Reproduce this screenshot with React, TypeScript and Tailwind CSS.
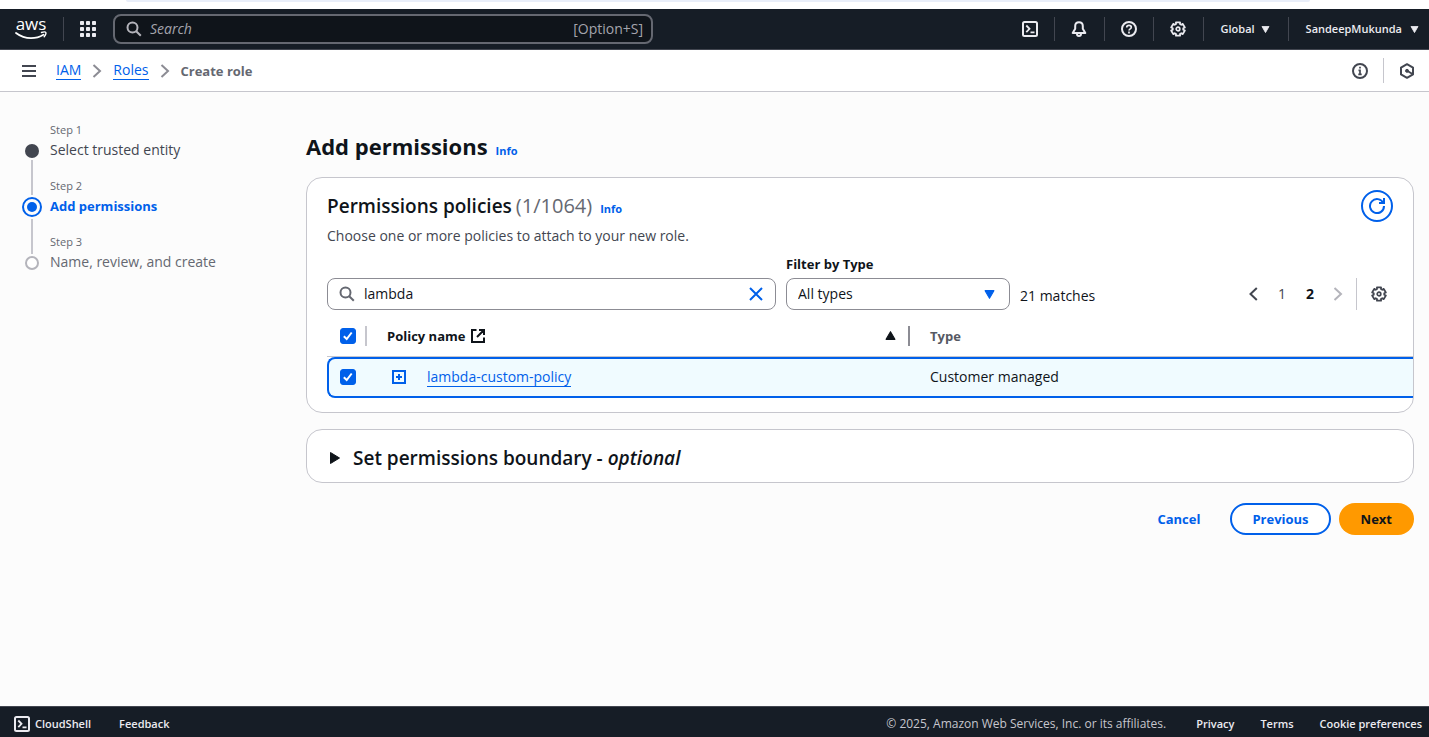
import { useState, type ReactNode } from "react";

function AwsLogo() {
  return (
    <span className="flex w-8 flex-col items-center text-white">
      <span className="pb-px text-[17px] leading-3 font-medium">aws</span>
      <svg viewBox="0 0 32 9" className="h-[9px] w-8" fill="none" stroke="currentColor">
        <path d="M1 2c4.500 3.400 9.500 5.200 15 5.200 4.500 0 9-1.300 12.500-3.400" strokeWidth="1.800" strokeLinecap="round" />
        <path d="M26.500 1.500c2-.7 4-.6 4.300 0 .3.700-.3 2.800-1.600 4.300" strokeWidth="1.400" strokeLinecap="round" />
      </svg>
    </span>
  );
}

function Icon({ children, className = "size-4" }: { children: ReactNode; className?: string }) {
  return (
    <svg viewBox="0 0 16 16" className={className} fill="none" stroke="currentColor" strokeWidth="2" aria-hidden="true">
      {children}
    </svg>
  );
}

function GridIcon() {
  const stops = [0, 6, 12];
  return (
    <svg viewBox="0 0 16 16" className="size-4" fill="currentColor" aria-hidden="true">
      {stops.map((y) => stops.map((x) => <rect key={`${x}-${y}`} x={x} y={y} width="4" height="4" rx="0.8" />))}
    </svg>
  );
}

function GearIcon() {
  return (
    <Icon>
      <path
        d="M10.050 1.300 9.980 3.090l1.280.73 1.510-.94 2.050 3.550-1.570.83v1.480l1.570.83-2.050 3.550-1.510-.94-1.280.73.070 1.790h-4.100l.070-1.790-1.280-.73-1.510.94-2.050-3.550 1.570-.83V7.260l-1.570-.83 2.050-3.550 1.510.94 1.280-.73L5.950 1.300z"
        strokeWidth="1.800"
        strokeLinejoin="round"
      />
      <circle cx="8" cy="8" r="1.800" strokeWidth="1.700" />
    </Icon>
  );
}

function SearchIcon({ className }: { className?: string }) {
  return (
    <Icon className={className}>
      <circle cx="6.500" cy="6.500" r="5" />
      <path d="m10.200 10.200 4.600 4.600" />
    </Icon>
  );
}

function ShellIcon() {
  return (
    <Icon>
      <rect x="1" y="1" width="14" height="14" rx="1.500" />
      <path d="m4.300 4.500 3.200 3.300-3.200 3.300M8.500 11.300h4" strokeWidth="1.800" />
    </Icon>
  );
}

function ChevronRight({ className }: { className?: string }) {
  return (
    <Icon className={className}>
      <path d="m4.500 2 6.500 6-6.500 6" />
    </Icon>
  );
}

function Caret({ className }: { className: string }) {
  return (
    <svg viewBox="0 0 10 8" className={className} fill="currentColor" aria-hidden="true">
      <path d="M1 .5h8l-4 7z" stroke="currentColor" strokeWidth="1" strokeLinejoin="round" />
    </svg>
  );
}

function Checkbox({ label }: { label: string }) {
  const [checked, setChecked] = useState(true);
  return (
    <span className="grid size-4">
      <input
        type="checkbox"
        aria-label={label}
        checked={checked}
        onChange={(e) => setChecked(e.target.checked)}
        className="col-start-1 row-start-1 size-4 appearance-none rounded-[3px] border border-[#8c8c94] bg-white checked:border-[#0060ea] checked:bg-[#0060ea]"
      />
      {checked && (
        <svg viewBox="0 0 16 16" className="pointer-events-none col-start-1 row-start-1 size-4" fill="none" stroke="#fff" strokeWidth="2">
          <path d="m3.800 8.300 2.900 2.700 5-6.500" />
        </svg>
      )}
    </span>
  );
}

function Info() {
  return (
    <a href="#info" className="text-[11px] leading-4 font-bold text-[#0060ea]">
      Info
    </a>
  );
}

function TopBar() {
  return (
    <header className="flex h-[41px] items-center border-b border-[#424650] bg-[#161d26] text-[#ebebf0]">
      <a href="#home" aria-label="AWS home" className="ml-[15px]">
        <AwsLogo />
      </a>
      <span className="ml-4 h-6 w-px bg-[#424650]" />
      <button aria-label="Services" className="ml-4">
        <GridIcon />
      </button>
      <label className="ml-[17px] flex h-[30px] w-[540px] items-center rounded-lg border-2 border-[#656871] bg-[#0f141a] px-2 text-[#b4b4bb]">
        <SearchIcon className="ml-[3px] size-4" />
        <input
          aria-label="Search"
          placeholder="Search"
          className="ml-2 min-w-0 flex-1 bg-transparent italic outline-none placeholder:text-[#a4a4ad]"
        />
        <span className="text-[#a4a4ad]">[Option+S]</span>
      </label>
      <nav className="ml-auto flex items-center text-[11px] font-semibold">
        <button aria-label="CloudShell" className="flex w-12 justify-center">
          <ShellIcon />
        </button>
        <span className="h-6 w-px bg-[#424650]" />
        <button aria-label="Notifications" className="flex w-[49px] justify-center">
          <Icon>
            <path d="M8 1.200C5.600 1.200 4.200 3 4.200 5v2.700L1.700 12h12.600l-2.500-4.300V5c0-2-1.400-3.800-3.800-3.800Z" strokeLinejoin="round" />
            <path d="M6 13c0 1.300.8 2 2 2s2-.7 2-2" />
          </Icon>
        </button>
        <span className="h-6 w-px bg-[#424650]" />
        <button aria-label="Help" className="flex w-12 justify-center">
          <Icon>
            <circle cx="8" cy="8" r="7" />
            <path d="M5.700 6.500C5.700 5 6.700 4.300 8 4.300s2.300.8 2.300 2C10.300 7.900 8 7.800 8 9.600M8 10.600v1.800" strokeWidth="1.700" />
          </Icon>
        </button>
        <span className="h-6 w-px bg-[#424650]" />
        <button aria-label="Settings" className="flex w-[49px] justify-center">
          <GearIcon />
        </button>
        <span className="h-6 w-px bg-[#424650]" />
        <button className="flex items-center gap-1.5 pr-[18px] pl-[17px]">
          Global <Caret className="h-[7px] w-[9px]" />
        </button>
        <span className="h-6 w-px bg-[#424650]" />
        <button className="flex items-center gap-2 pr-2.5 pl-[17px]">
          SandeepMukunda <Caret className="h-[7px] w-[9px]" />
        </button>
      </nav>
    </header>
  );
}

function Breadcrumbs() {
  return (
    <div className="flex h-[42px] items-center border-b border-[#c6c6cd] bg-white pl-[21px]">
      <button aria-label="Open navigation" className="text-[#424650]">
        <Icon>
          <path d="M1 3h14M1 8h14M1 13h14" />
        </Icon>
      </button>
      <nav aria-label="Breadcrumbs" className="ml-[19px] flex items-center gap-2">
        <a href="#iam" className="border-b border-[#0060ea] leading-[18px] text-[#0060ea]">
          IAM
        </a>
        <ChevronRight className="size-4 text-[#8c8c94]" />
        <a href="#roles" className="border-b border-[#0060ea] leading-[18px] text-[#0060ea]">
          Roles
        </a>
        <ChevronRight className="size-4 text-[#8c8c94]" />
        <span className="text-[13px] font-bold text-[#656871]">Create role</span>
      </nav>
      <div className="ml-auto flex items-center text-[#424650]">
        <button aria-label="Help panel">
          <Icon>
            <circle cx="8" cy="8" r="7" />
            <path d="M8 3.800v1.800M6.500 7.300H8v4M6.300 11.400h3.400" strokeWidth="1.700" />
          </Icon>
        </button>
        <span className="mx-[15px] h-[25px] w-px bg-[#c6c6cd]" />
        <button aria-label="Tools" className="mr-3.5">
          <Icon>
            <path d="m8 1.200 6 3.400v6.800l-6 3.400-6-3.400V4.600z" strokeLinejoin="round" />
            <path d="m8.500 8 5 3" />
            <circle cx="8" cy="7.800" r="1.500" fill="currentColor" strokeWidth="1" />
          </Icon>
        </button>
      </div>
    </div>
  );
}

function Steps() {
  return (
    <nav aria-label="Steps" className="w-[306px] shrink-0 pt-[30px] pl-[22px]">
      <ol>
        <li className="flex h-14 gap-2">
          <span className="flex w-5 flex-col items-center pt-[22px]">
            <span className="size-3.5 shrink-0 rounded-full bg-[#424650]" />
            <span className="mt-0.5 h-[35px] w-0.5 shrink-0 bg-[#c6c6cd]" />
          </span>
          <span className="flex flex-col">
            <span className="text-[11px] leading-4 text-[#656871]">Step 1</span>
            <a href="#step-1" className="mt-0.5 text-[#424650]">Select trusted entity</a>
          </span>
        </li>
        <li className="flex h-14 gap-2">
          <span className="flex w-5 flex-col items-center pt-[19px]">
            <span className="flex size-5 shrink-0 items-center justify-center rounded-full border-2 border-[#0060ea]">
              <span className="size-2.5 rounded-full bg-[#0060ea]" />
            </span>
            <span className="mt-0.5 h-[35px] w-0.5 shrink-0 bg-[#c6c6cd]" />
          </span>
          <span className="flex flex-col">
            <span className="text-[11px] leading-4 text-[#656871]">Step 2</span>
            <span aria-current="step" className="mt-0.5 text-[13px] font-bold text-[#0060ea]">Add permissions</span>
          </span>
        </li>
        <li className="flex gap-2">
          <span className="flex w-5 flex-col items-center pt-[22px]">
            <span className="size-3.5 rounded-full border-2 border-[#b4b4bb] bg-white" />
          </span>
          <span className="flex flex-col">
            <span className="text-[11px] leading-4 text-[#656871]">Step 3</span>
            <span className="mt-0.5 text-[#656871]">Name, review, and create</span>
          </span>
        </li>
      </ol>
    </nav>
  );
}

function Filters() {
  const [query, setQuery] = useState("lambda");
  return (
    <div className="mt-2 flex items-end pr-[26px] pl-5">
      <label className="flex h-8 min-w-0 flex-1 items-center rounded-lg border border-[#8c8c94] bg-white px-[11px] text-[#656871] lg:max-w-[449px]">
        <SearchIcon className="size-4" />
        <input
          aria-label="Filter policies"
          value={query}
          onChange={(e) => setQuery(e.target.value)}
          className="ml-[9px] min-w-0 flex-1 bg-transparent text-[#0f141a] outline-none"
        />
        <button aria-label="Clear filter" onClick={() => setQuery("")} className="text-[#0060ea]">
          <Icon>
            <path d="m2 2 12 12M14 2 2 14" />
          </Icon>
        </button>
      </label>
      <div className="ml-2.5 w-56">
        <label htmlFor="type" className="mb-1 block text-[13px] leading-5 font-bold text-[#0f141a]">
          Filter by Type
        </label>
        <span className="grid items-center">
          <select
            id="type"
            className="col-start-1 row-start-1 h-8 w-full appearance-none rounded-lg border border-[#8c8c94] bg-white px-[11px] text-[#0f141a]"
          >
            <option>All types</option>
          </select>
          <Caret className="pointer-events-none col-start-1 row-start-1 mr-[15px] h-[9px] w-[11px] justify-self-end text-[#0060ea]" />
        </span>
      </div>
      <span className="ml-2.5 pb-1 leading-5 text-[#0f141a]">21 matches</span>
      <nav aria-label="Pages" className="ml-auto flex h-8 items-center text-[#424650]">
        <button aria-label="Previous page">
          <Icon>
            <path d="m10.800 2-6.300 6 6.300 6" />
          </Icon>
        </button>
        <button className="ml-1.5 w-7">1</button>
        <button aria-current="page" className="w-7 font-bold text-[#0f141a]">2</button>
        <button aria-label="Next page" disabled className="ml-1.5 text-[#b4b4bb]">
          <ChevronRight className="size-4" />
        </button>
        <span className="ml-2.5 h-8 w-px bg-[#c6c6cd]" />
        <button aria-label="Preferences" className="ml-3.5">
          <GearIcon />
        </button>
      </nav>
    </div>
  );
}

function PolicyTable() {
  return (
    <div className="mt-[7px] pl-5">
      <table className="w-full table-fixed border-separate border-spacing-0 text-left text-[#0f141a]">
        <colgroup>
          <col className="w-10" />
          <col className="w-[543px]" />
          <col />
        </colgroup>
        <thead>
          <tr className="h-10 text-[13px]">
            <th className="border-b border-[#c6c6cd] pb-0.5 pl-[13px]">
              <span className="flex items-center justify-between">
                <Checkbox label="Select all policies" />
                <span className="h-5 w-0.5 bg-[#c6c6cd]" />
              </span>
            </th>
            <th className="border-b border-[#c6c6cd] pb-0.5 pl-5 font-bold">
              <span className="flex items-center">
                Policy name
                <Icon className="ml-[5px] size-4">
                  <path d="M6.500 2H2v12h12V9.500M9 2h5v5M14 2 7 9" />
                </Icon>
                <span className="ml-auto flex items-center gap-3">
                  <Caret className="h-[9px] w-[11px] rotate-180" />
                  <span className="h-5 w-0.5 bg-[#8c8c94]" />
                </span>
              </span>
            </th>
            <th className="border-b border-[#c6c6cd] pb-0.5 pl-5 font-bold text-[#565963]">Type</th>
          </tr>
        </thead>
        <tbody>
          <tr className="h-[41px] bg-[#f0fbff]">
            <td className="rounded-l-lg border-y-2 border-l-2 border-[#0060ea] pb-0.5 pl-[11px]">
              <Checkbox label="Select lambda-custom-policy" />
            </td>
            <td className="border-y-2 border-[#0060ea] pb-px pl-6">
              <span className="flex items-center">
                <button aria-label="Expand lambda-custom-policy" className="text-[#0060ea]">
                  <Icon>
                    <path d="M2 2h12v12H2zM8 5v6M5 8h6" />
                  </Icon>
                </button>
                <a href="#policy" className="ml-5 border-b border-[#0060ea] leading-[18px] text-[#0060ea]">
                  lambda-custom-policy
                </a>
              </span>
            </td>
            <td className="border-y-2 border-[#0060ea] pb-0.5 pl-5">Customer managed</td>
          </tr>
        </tbody>
      </table>
    </div>
  );
}

export default function App() {
  return (
    <div className="flex min-h-screen flex-col bg-[#fcfcfc] font-['Open_Sans','Noto_Sans',sans-serif] text-sm leading-5">
      <div className="h-[9px] bg-white pr-[119px] pl-[126px]">
        <div className="h-0.5 rounded-b-full bg-[#e9eef9]" />
      </div>
      <TopBar />
      <Breadcrumbs />
      <div className="flex flex-1">
        <Steps />
        <main className="min-w-0 flex-1 pt-[39px] pr-[15px]">
          <h1 className="flex items-baseline gap-2 text-[22px] leading-[30px] font-bold text-[#0f141a]">
            Add permissions <Info />
          </h1>
          <section className="mt-4 overflow-hidden rounded-2xl border border-[#c6c6cd] bg-white pb-3.5">
            <div className="flex items-start justify-between pt-3 pr-5 pl-5">
              <div>
                <h2 className="mt-1 flex items-baseline text-[19px] leading-6 font-semibold text-[#0f141a]">
                  Permissions policies <span className="mr-2 ml-1 text-xl leading-6 font-normal text-[#656871]">(1/1064)</span>
                  <Info />
                </h2>
                <p className="mt-2 text-[#424650]">Choose one or more policies to attach to your new role.</p>
              </div>
              <button
                aria-label="Refresh"
                className="flex size-8 items-center justify-center rounded-full border-2 border-[#0060ea] text-[#0060ea]"
              >
                <Icon>
                  <path d="M10 5h5V0M15 8a7 7 0 1 1-.7-3" />
                </Icon>
              </button>
            </div>
            <Filters />
            <PolicyTable />
          </section>
          <section className="mt-4 rounded-2xl border border-[#c6c6cd] bg-white">
            <button aria-expanded="false" className="flex h-[52px] w-full items-center pt-1 pl-[22px] text-left text-[19px] text-[#0f141a]">
              <svg viewBox="0 0 12 14" className="mr-3 h-3.5 w-3" fill="currentColor" aria-hidden="true">
                <path d="M1.500 1.500v11l9-5.500z" stroke="currentColor" strokeLinejoin="round" />
              </svg>
              <span className="font-semibold">
                Set permissions boundary - <i>optional</i>
              </span>
            </button>
          </section>
          <div className="mt-5 flex justify-end gap-2 text-[13px] font-bold">
            <button className="h-8 px-[22px] text-[#0060ea]">Cancel</button>
            <button className="h-8 rounded-full border-2 border-[#0060ea] bg-white px-5 text-[#0060ea]">Previous</button>
            <button className="h-8 rounded-full bg-[#ff9900] px-[22px] text-[#0f141a]">Next</button>
          </div>
        </main>
      </div>
      <footer className="flex h-[31px] items-center border-t border-[#424650] bg-[#161d26] pt-1 pr-[7px] pl-3.5 text-[11px] font-semibold text-[#ebebf0]">
        <button className="flex items-center gap-[5px]">
          <ShellIcon /> CloudShell
        </button>
        <a href="#feedback" className="ml-7">Feedback</a>
        <span className="ml-auto text-xs font-normal text-[#c6c6cd]">© 2025, Amazon Web Services, Inc. or its affiliates.</span>
        <a href="#privacy" className="ml-[30px]">Privacy</a>
        <a href="#terms" className="ml-[26px]">Terms</a>
        <a href="#cookies" className="ml-[26px]">Cookie preferences</a>
      </footer>
    </div>
  );
}
